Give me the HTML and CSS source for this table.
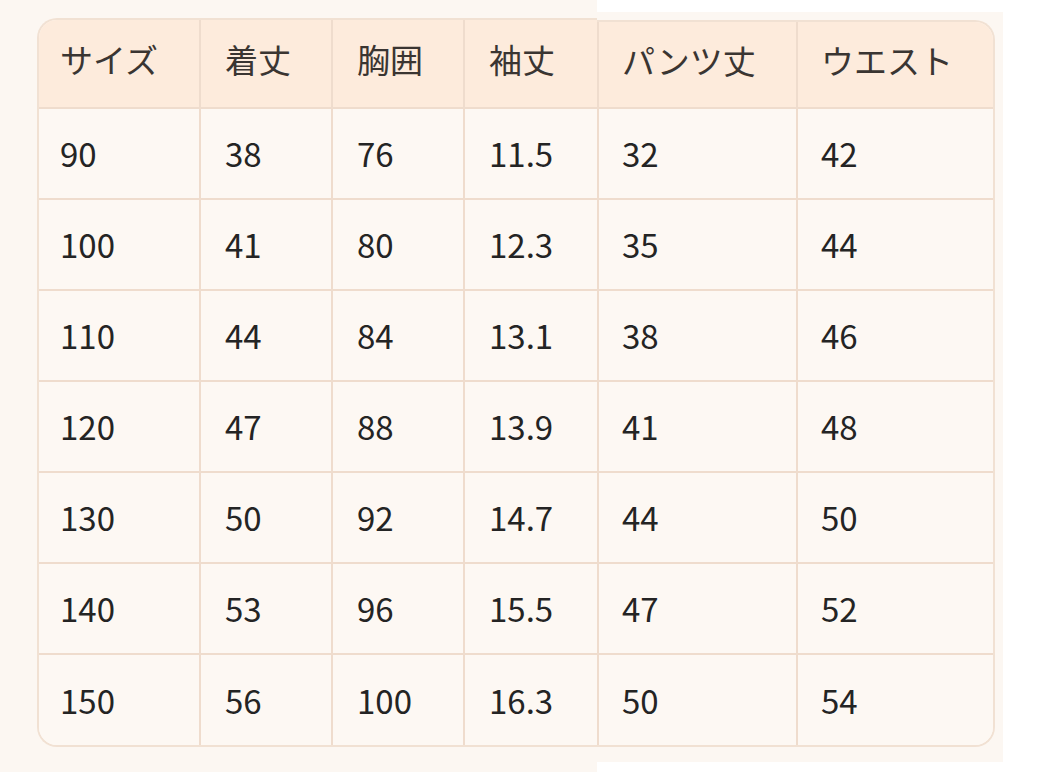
FILE: index.html
```html
<!DOCTYPE html>
<html lang="ja">
<head>
<meta charset="utf-8">
<title>サイズ表</title>
<link rel="stylesheet" href="styles.css">
</head>
<body>
<div class="sheet">
  <section class="panel panel-left">
    <div class="frame frame-left">
      <table class="size-table">
        <colgroup>
          <col class="c1"><col class="c2"><col class="c3"><col class="c4">
        </colgroup>
        <thead>
          <tr><th>サイズ</th><th>着丈</th><th>胸囲</th><th>袖丈</th></tr>
        </thead>
        <tbody>
          <tr><td>90</td><td>38</td><td>76</td><td>11.5</td></tr>
          <tr><td>100</td><td>41</td><td>80</td><td>12.3</td></tr>
          <tr><td>110</td><td>44</td><td>84</td><td>13.1</td></tr>
          <tr><td>120</td><td>47</td><td>88</td><td>13.9</td></tr>
          <tr><td>130</td><td>50</td><td>92</td><td>14.7</td></tr>
          <tr><td>140</td><td>53</td><td>96</td><td>15.5</td></tr>
          <tr><td>150</td><td>56</td><td>100</td><td>16.3</td></tr>
        </tbody>
      </table>
    </div>
  </section>
  <section class="panel panel-right">
    <div class="frame frame-right">
      <table class="size-table">
        <colgroup>
          <col class="c5"><col class="c6">
        </colgroup>
        <thead>
          <tr><th>パンツ丈</th><th>ウエスト</th></tr>
        </thead>
        <tbody>
          <tr><td>32</td><td>42</td></tr>
          <tr><td>35</td><td>44</td></tr>
          <tr><td>38</td><td>46</td></tr>
          <tr><td>41</td><td>48</td></tr>
          <tr><td>44</td><td>50</td></tr>
          <tr><td>47</td><td>52</td></tr>
          <tr><td>50</td><td>54</td></tr>
        </tbody>
      </table>
    </div>
  </section>
</div>
</body>
</html>
```

FILE: styles.css
```css
html, body {
  margin: 0;
  padding: 0;
  background: #ffffff;
}

body {
  font-family: "Noto Sans CJK JP", "Noto Sans", sans-serif;
  color: #262626;
}

.sheet {
  display: flex;
  align-items: flex-start;
  width: 1039px;
  height: 772px;
  overflow: hidden;
}

.panel {
  background: #fcf7f2;
  box-sizing: border-box;
}

.panel-left {
  width: 597px;
  height: 772px;
  padding: 18px 0 0 37px;
}

.panel-right {
  width: 406px;
  height: 750px;
  margin-top: 12px;
  padding: 8px 0 0 0;
}

.frame {
  overflow: hidden;
  border: 2px solid #f1e1d3;
  box-sizing: border-box;
  background: #fdf8f3;
}

.frame-left {
  width: 561px;
  border-right: none;
  border-radius: 20px 0 0 20px;
}

.frame-right {
  width: 398px;
  border-left: none;
  border-radius: 0 20px 20px 0;
}

.size-table {
  border-collapse: collapse;
  table-layout: fixed;
  width: 100%;
}

.c1 { width: 161px; }
.c2 { width: 132px; }
.c3 { width: 132px; }
.c4 { width: 134px; }
.c5 { width: 199px; }
.c6 { width: 197px; }

.size-table th,
.size-table td {
  box-sizing: border-box;
  text-align: left;
  font-size: 33px;
  font-weight: 400;
  line-height: 1;
  padding: 0 0 0 24px;
  border-right: 2px solid #efdccd;
  border-bottom: 2px solid #efdccd;
}

.size-table th:first-child,
.size-table td:first-child {
  padding-left: 21px;
}

.size-table th:last-child,
.size-table td:last-child {
  border-right: none;
}

.size-table tbody tr:last-child td {
  border-bottom: none;
}

.frame-left .size-table th:last-child,
.frame-left .size-table td:last-child {
  border-right: 2px solid #efdccd;
}

.size-table th {
  height: 88px;
  background: #fdebdc;
  color: #3a3532;
  padding-bottom: 8px;
}

.size-table td {
  height: 91px;
  background: #fdf8f3;
  color: #242424;
  padding-top: 0;
}

.frame-right .size-table th {
  height: 86px;
}

.frame-right .size-table th:first-child,
.frame-right .size-table td:first-child {
  padding-left: 23px;
  border-left: 2px solid #efdccd;
}

.frame-right .size-table th:last-child,
.frame-right .size-table td:last-child {
  padding-left: 23px;
}
```
